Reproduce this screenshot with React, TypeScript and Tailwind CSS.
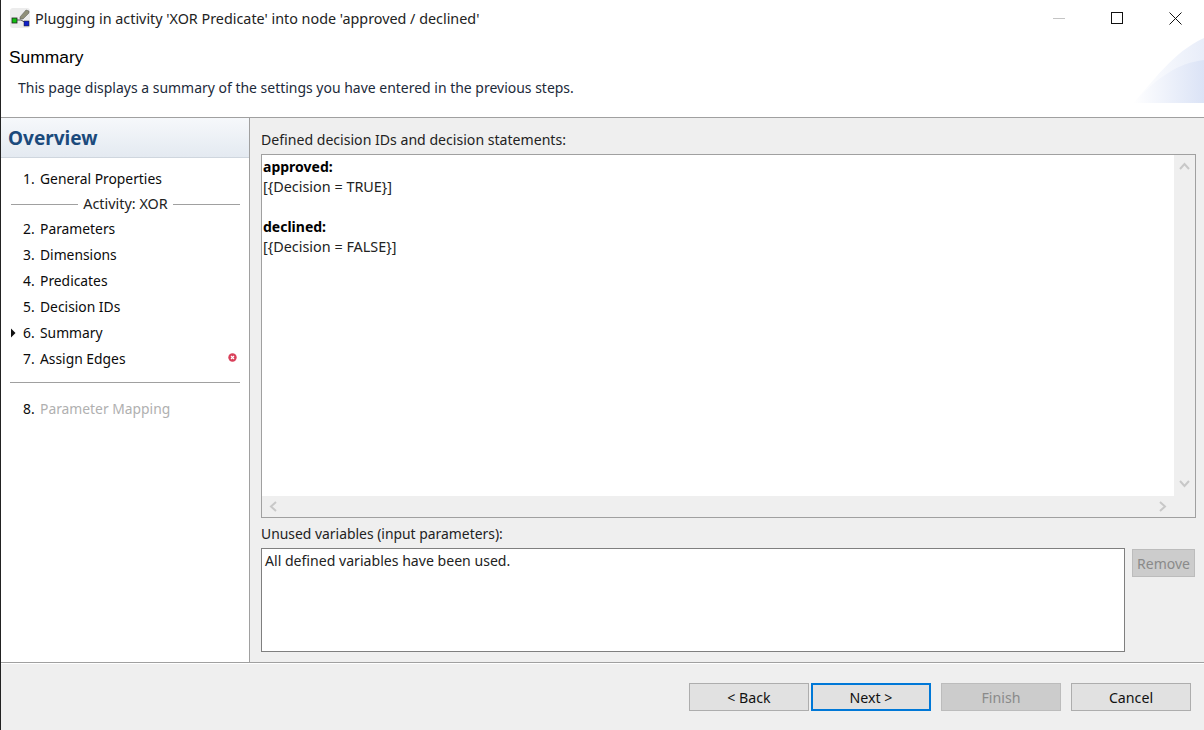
import React from "react";

const font = { fontFamily: '"Noto Sans", sans-serif' };

function Step({ n, label, marker, error, disabled }: { n: string; label: string; marker?: boolean; error?: boolean; disabled?: boolean }) {
  return (
    <div className="relative flex h-[26px] items-center pl-[22px] pr-[12px] text-[13.85px] text-[#0b0b0b]">
      {marker && (
        <svg className="absolute left-[9px] top-[8px]" width="6" height="10" viewBox="0 0 6 10">
          <path d="M1 0.5 L5.5 5 L1 9.5 Z" fill="#111" />
        </svg>
      )}
      <span className="w-[17px]">{n}</span>
      <span className={disabled ? "text-[#b0b0b0]" : ""}>{label}</span>
      {error && (
        <svg className="absolute left-[227px] top-[7px]" width="9" height="9" viewBox="0 0 9 9">
          <circle cx="4.5" cy="4.5" r="4.2" fill="#d9405a" />
          <path d="M3 3 L6 6 M6 3 L3 6" stroke="#fff" strokeWidth="1.2" />
        </svg>
      )}
    </div>
  );
}

function Btn({ children, variant }: { children: React.ReactNode; variant?: "focus" | "disabled" }) {
  const cls =
    variant === "focus"
      ? "border-2 border-[#0078d7] bg-[#e1e1e1] text-[#111]"
      : variant === "disabled"
      ? "border border-[#bcbcbc] bg-[#cccccc] text-[#8a8a8a]"
      : "border border-[#adadad] bg-[#e1e1e1] text-[#111]";
  return <div className={`flex h-[28px] w-[120px] items-center justify-center pt-[2px] text-[14.2px] ${cls}`}>{children}</div>;
}

export default function App() {
  return (
    <div style={font} className="flex h-[730px] w-[1204px] flex-col overflow-hidden border-l border-l-[#222] bg-white">
      <div className="flex h-[36px] items-center pl-[9px]">
        <svg width="20" height="20" viewBox="0 0 20 20" className="mr-[5px]">
          <rect x="0" y="0" width="20" height="20" rx="3" fill="#ececec" />
          <path d="M5 12 L11 12 L16 15" fill="none" stroke="#555" strokeWidth="1" />
          <rect x="2" y="10" width="5" height="5" fill="#10c010" stroke="#222" strokeWidth="0.8" />
          <rect x="14" y="13" width="5" height="5" fill="#1020c8" stroke="#222" strokeWidth="0.5" />
          <path d="M10 9 L16 2 L19 3 L19 5 L13 11 L10 11 Z" fill="#8f8f78" stroke="#555" strokeWidth="0.5" />
        </svg>
        <span className="pt-[2px] text-[14.35px] text-[#222]">Plugging in activity 'XOR Predicate' into node 'approved / declined'</span>
        <div className="ml-auto flex items-center">
          <div className="mr-[46px] h-px w-[12px] bg-[#c4c4c4]" />
          <div className="mr-[46px] h-[12px] w-[12px] border border-[#111]" />
          <svg className="mr-[22px]" width="13" height="13" viewBox="0 0 13 13">
            <path d="M0.5 0.5 L12.5 12.5 M12.5 0.5 L0.5 12.5" stroke="#111" strokeWidth="1" />
          </svg>
        </div>
      </div>

      <div className="relative h-[82px] border-b border-[#a0a0a0] bg-white">
        <svg className="absolute right-0 top-[1px]" width="71" height="66" viewBox="0 0 71 66">
          <defs>
            <linearGradient id="a" x1="0" x2="1" y1="0" y2="0">
              <stop offset="0" stopColor="#ffffff" />
              <stop offset="1" stopColor="#e8edf9" />
            </linearGradient>
            <linearGradient id="b" x1="0" x2="1" y1="0" y2="0">
              <stop offset="0" stopColor="#ffffff" />
              <stop offset="1" stopColor="#dbe3f6" />
            </linearGradient>
          </defs>
          <path d="M0 66 C20 45 40 15 71 1 L71 66 Z" fill="url(#a)" />
          <path d="M0 66 C25 40 45 26 71 23 L71 66 Z" fill="url(#b)" />
        </svg>
        <div className="pl-[8px] pt-[9px] text-[17.4px] leading-[24px] text-black" style={{ fontFamily: '"Liberation Sans", sans-serif' }}>
          Summary
        </div>
        <div className="pl-[17px] pt-[9px] text-[13.97px] leading-[20px] text-[#1c2a3a]">
          This page displays a summary of the settings you have entered in the previous steps.
        </div>
      </div>

      <div className="flex h-[544px]">
        <div className="flex w-[249px] flex-col border-r border-[#a0a0a0] bg-white">
          <div className="flex h-[40px] items-center border-b border-[#cfd6de] bg-gradient-to-b from-[#f6f8fb] to-[#e4eaf1] pl-[7px] pt-[2px] text-[19px] font-bold text-[#1b4a7c]">
            Overview
          </div>
          <div className="pt-[8px]">
            <Step n="1." label="General Properties" />
            <div className="flex h-[24px] items-center pl-[10px] pr-[9px] text-[14.4px] text-[#222]">
              <div className="h-px flex-1 bg-[#a0a0a0]" />
              <span className="px-[5px]">Activity: XOR</span>
              <div className="h-px flex-1 bg-[#a0a0a0]" />
            </div>
            <Step n="2." label="Parameters" />
            <Step n="3." label="Dimensions" />
            <Step n="4." label="Predicates" />
            <Step n="5." label="Decision IDs" />
            <Step n="6." label="Summary" marker />
            <Step n="7." label="Assign Edges" error />
            <div className="mx-[9px] mt-[10px] h-px bg-[#a0a0a0]" />
            <div className="mt-[13px]">
              <Step n="8." label="Parameter Mapping" disabled />
            </div>
          </div>
        </div>

        <div className="flex flex-1 flex-col bg-[#efefef] pl-[11px] pr-[8px]">
          <div className="flex h-[36px] items-center pt-[8px] text-[14.1px] text-[#222]">Defined decision IDs and decision statements:</div>
          <div className="relative h-[364px] border border-[#a0a0a0] bg-white">
            <div className="px-[1px] pt-[2px] text-[14.4px] leading-[20px] text-[#222]">
              <div className="text-[14px] font-bold text-black">approved:</div>
              <div>[{"{"}Decision = TRUE{"}"}]</div>
              <div className="h-[20px]" />
              <div className="text-[14px] font-bold text-black">declined:</div>
              <div>[{"{"}Decision = FALSE{"}"}]</div>
            </div>
            <div className="absolute bottom-0 right-0 top-0 w-[21px] bg-[#efefef]">
              <svg className="absolute left-[5px] top-[7px]" width="11" height="8" viewBox="0 0 11 8">
                <path d="M1 7 L5.5 2 L10 7" fill="none" stroke="#c8c8c8" strokeWidth="2" />
              </svg>
              <svg className="absolute left-[5px] top-[325px]" width="11" height="8" viewBox="0 0 11 8">
                <path d="M1 1 L5.5 6 L10 1" fill="none" stroke="#c8c8c8" strokeWidth="2" />
              </svg>
            </div>
            <div className="absolute bottom-0 left-0 right-0 h-[21px] bg-[#efefef]">
              <svg className="absolute left-[7px] top-[5px]" width="8" height="11" viewBox="0 0 8 11">
                <path d="M7 1 L2 5.5 L7 10" fill="none" stroke="#c8c8c8" strokeWidth="2" />
              </svg>
              <svg className="absolute right-[28px] top-[5px]" width="8" height="11" viewBox="0 0 8 11">
                <path d="M1 1 L6 5.5 L1 10" fill="none" stroke="#c8c8c8" strokeWidth="2" />
              </svg>
            </div>
          </div>
          <div className="flex h-[30px] items-center pt-[2px] text-[13.9px] text-[#222]">Unused variables (input parameters):</div>
          <div className="flex gap-[7px]">
            <div className="h-[104px] w-[864px] border border-[#7f7f7f] bg-white pl-[3px] pt-[2px] text-[14.1px] leading-[20px] text-[#222]">
              All defined variables have been used.
            </div>
            <div className="mt-px flex h-[28px] w-[63px] items-center justify-center border border-[#bcbcbc] bg-[#cccccc] text-[14px] text-[#8a8a8a]">
              Remove
            </div>
          </div>
        </div>
      </div>

      <div className="flex flex-1 items-start justify-end border-t border-[#a0a0a0] bg-[#efefef] pr-[13px] pt-[20px] shadow-[inset_0_1px_0_#ffffff]">
        <div className="mr-[2px]"><Btn>&lt; Back</Btn></div>
        <div className="mr-[10px]"><Btn variant="focus">Next &gt;</Btn></div>
        <div className="mr-[10px]"><Btn variant="disabled">Finish</Btn></div>
        <Btn>Cancel</Btn>
      </div>
    </div>
  );
}
